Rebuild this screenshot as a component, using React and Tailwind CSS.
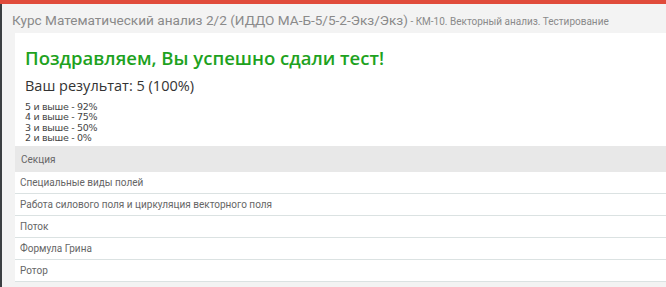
const rows = [
  "Специальные виды полей",
  "Работа силового поля и циркуляция векторного поля",
  "Поток",
  "Формула Грина",
  "Ротор",
];

const grades = ["5 и выше - 92%", "4 и выше - 75%", "3 и выше - 50%", "2 и выше - 0%"];

export default function App() {
  return (
    <div className="w-[666px] h-[287px] overflow-hidden bg-[#f3f3f3] flex flex-col">
      <div className="h-[4px] bg-[#e04b3b] shrink-0" />
      <div className="flex flex-1">
        <div className="w-[2px] bg-[#3b3f42] shrink-0" />
        <div className="flex-1 flex flex-col">
          <div className="pl-[10px] pt-[4px] h-[29px] whitespace-nowrap font-['Roboto',sans-serif] text-[#8a8a8a]">
            <span className="text-[13.6px]">Курс Математический анализ 2/2 (ИДДО МА-Б-5/5-2-Экз/Экз)</span>
            <span className="text-[10px]"> - КМ-10. Векторный анализ. Тестирование</span>
          </div>
          <div className="ml-[13px] bg-white flex flex-col">
            <div className="px-[10px] pt-[12px] font-['Open_Sans',sans-serif]">
              <h1 className="text-[18.5px] leading-[26px] font-semibold text-[#1ea21e]">
                Поздравляем, Вы успешно сдали тест!
              </h1>
              <p className="mt-[5px] text-[14.5px] leading-[20px] text-[#333]">Ваш результат: 5 (100%)</p>
              <div className="mt-[6px] text-[9.5px] leading-[10.3px] text-[#444] font-['DejaVu_Sans',sans-serif] tracking-[-0.3px]">
                {grades.map((g) => (
                  <div key={g}>{g}</div>
                ))}
              </div>
            </div>
            <div className="mt-[3px] font-['Roboto',sans-serif] text-[10px] text-[#666]">
              <div className="bg-[#e8e8e8] h-[26px] px-[6px] flex items-center">Секция</div>
              {rows.map((r) => (
                <div key={r} className="h-[22px] px-[5px] flex items-center border-b border-[#dbe2e2]">
                  {r}
                </div>
              ))}
            </div>
          </div>
        </div>
      </div>
    </div>
  );
}
